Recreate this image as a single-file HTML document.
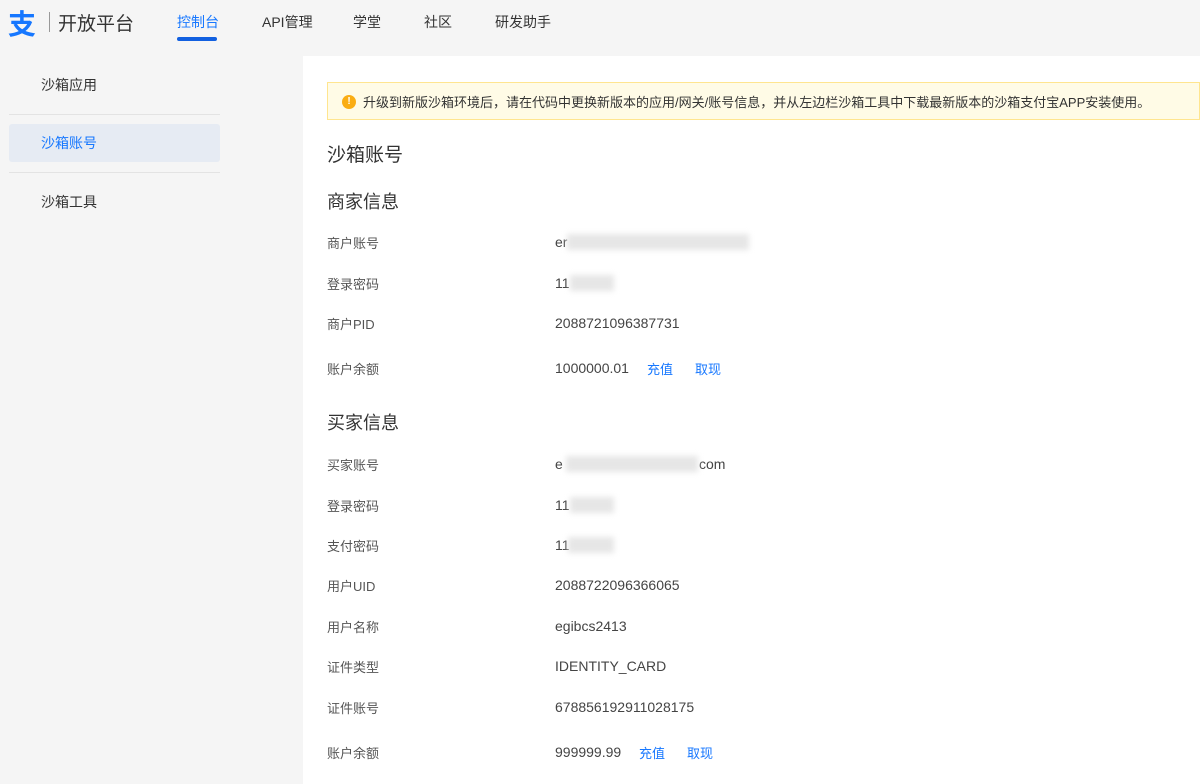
<!DOCTYPE html>
<html><head><meta charset="utf-8"><style>
*{margin:0;padding:0;box-sizing:border-box}
body{width:1200px;height:784px;overflow:hidden;background:#f5f5f5;font-family:"Liberation Sans","Noto Sans CJK SC",sans-serif;color:#333;position:relative}
.a{position:absolute;white-space:nowrap}
.main{position:absolute;left:303px;top:56px;width:897px;height:728px;background:#fff}
.nav{font-size:14px;color:#333;top:12px}
.side{font-size:14px;color:#333;left:41px}
.lbl{font-size:13px;color:#555;left:327px}
.val{font-size:14px;color:#444;left:555px}
.lnk{font-size:13px;color:#1677ff}
.h{font-size:18px;color:#333;left:327px}
.blur{position:absolute;background:#e6e6e6;filter:blur(3px);height:16px}
</style></head><body>
<div class="a" style="left:8px;top:3px;font-size:28px;font-weight:bold;color:#1677ff">支</div>
<div class="a" style="left:49px;top:12px;width:1px;height:20px;background:#999"></div>
<div class="a" style="left:58px;top:9px;font-size:19px;color:#333">开放平台</div>
<div class="a nav" style="left:177px;color:#1677ff">控制台</div>
<div class="a" style="left:177px;top:37px;width:40px;height:4px;border-radius:2px;background:#1260e0"></div>
<div class="a nav" style="left:262px">API管理</div>
<div class="a nav" style="left:353px">学堂</div>
<div class="a nav" style="left:424px">社区</div>
<div class="a nav" style="left:495px">研发助手</div>

<div class="a side" style="top:75px">沙箱应用</div>
<div class="a" style="left:9px;top:114px;width:211px;height:1px;background:#e3e3e3"></div>
<div class="a" style="left:9px;top:124px;width:211px;height:38px;background:#e6ebf3;border-radius:3px"></div>
<div class="a side" style="top:133px;color:#1677ff">沙箱账号</div>
<div class="a" style="left:9px;top:172px;width:211px;height:1px;background:#e3e3e3"></div>
<div class="a side" style="top:192px">沙箱工具</div>

<div class="main"></div>
<div class="a" style="left:327px;top:82px;width:873px;height:38px;background:#fffbe6;border:1px solid #ffe58f"></div>
<div class="a" style="left:342px;top:95px;width:14px;height:14px;border-radius:50%;background:#faad14;color:#fff;font-size:10px;text-align:center;line-height:14px;font-weight:bold">!</div>
<div class="a" style="left:363px;top:92px;font-size:13px;color:#333">升级到新版沙箱环境后，请在代码中更换新版本的应用/网关/账号信息，并从左边栏沙箱工具中下载最新版本的沙箱支付宝APP安装使用。</div>
<div class="a h" style="top:140px;font-size:19px">沙箱账号</div>
<div class="a h" style="top:188px">商家信息</div>
<div class="a lbl" style="top:233px">商户账号</div><div class="a val" style="top:234px">er</div><div class="blur" style="left:567px;top:234px;width:182px"></div>
<div class="a lbl" style="top:274px">登录密码</div><div class="a val" style="top:275px">11</div><div class="blur" style="left:570px;top:275px;width:44px"></div>
<div class="a lbl" style="top:314px">商户PID</div><div class="a val" style="top:315px">2088721096387731</div>
<div class="a lbl" style="top:359px">账户余额</div><div class="a val" style="top:360px">1000000.01</div><div class="a lnk" style="left:647px;top:359px">充值</div><div class="a lnk" style="left:695px;top:359px">取现</div>
<div class="a h" style="top:409px">买家信息</div>
<div class="a lbl" style="top:455px">买家账号</div><div class="a val" style="top:456px">e</div><div class="a val" style="left:699px;top:456px">com</div><div class="blur" style="left:566px;top:456px;width:132px"></div>
<div class="a lbl" style="top:496px">登录密码</div><div class="a val" style="top:497px">11</div><div class="blur" style="left:570px;top:497px;width:44px"></div>
<div class="a lbl" style="top:536px">支付密码</div><div class="a val" style="top:537px">11</div><div class="blur" style="left:568px;top:537px;width:46px"></div>
<div class="a lbl" style="top:576px">用户UID</div><div class="a val" style="top:577px">2088722096366065</div>
<div class="a lbl" style="top:617px">用户名称</div><div class="a val" style="top:618px">egibcs2413</div>
<div class="a lbl" style="top:657px">证件类型</div><div class="a val" style="top:658px">IDENTITY_CARD</div>
<div class="a lbl" style="top:698px">证件账号</div><div class="a val" style="top:699px">678856192911028175</div>
<div class="a lbl" style="top:743px">账户余额</div><div class="a val" style="top:744px">999999.99</div><div class="a lnk" style="left:639px;top:743px">充值</div><div class="a lnk" style="left:687px;top:743px">取现</div>
</body></html>
